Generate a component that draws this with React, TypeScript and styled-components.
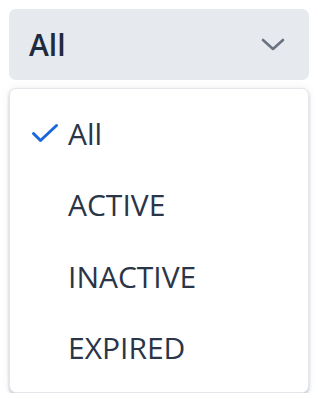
import styled, { createGlobalStyle } from 'styled-components'

const GlobalStyle = createGlobalStyle`
  body {
    margin: 0;
    background: #ffffff;
    font-family: 'Open Sans', 'Noto Sans', sans-serif;
  }
`

const Wrapper = styled.div`
  display: flex;
  flex-direction: column;
  gap: 8px;
  padding: 9px 9px 0;
  width: 300px;
`

const Trigger = styled.button`
  align-items: center;
  background: #e6e9ee;
  border: none;
  border-radius: 7px;
  color: #1f2a3c;
  display: flex;
  font-family: inherit;
  font-size: 30px;
  font-weight: 600;
  height: 71px;
  justify-content: space-between;
  padding: 0 24px 0 20px;
  width: 100%;
`

const Menu = styled.ul`
  background: #ffffff;
  border: 1px solid #e3e6eb;
  border-radius: 7px;
  box-shadow: 0 2px 3px rgba(100, 110, 130, 0.35), 0 0 8px rgba(120, 130, 150, 0.12);
  display: flex;
  flex-direction: column;
  height: 305px;
  justify-content: center;
  list-style: none;
  margin: 0;
  padding: 0;
  box-sizing: border-box;
`

const Item = styled.li`
  align-items: center;
  color: #2a3547;
  display: flex;
  font-size: 30px;
  font-weight: 400;
  height: 71.5px;
  padding-left: 21px;
`

const Check = styled.span`
  display: inline-flex;
  width: 37px;
`

const ITEMS = ['All', 'ACTIVE', 'INACTIVE', 'EXPIRED']

export default function App() {
  return (
    <>
      <GlobalStyle />
      <Wrapper>
        <Trigger>
          All
          <svg width='24' height='14' viewBox='0 0 24 14' fill='none'>
            <path d='M2 2l10 9 10-9' stroke='#6b7280' strokeWidth='2.6' strokeLinecap='round' strokeLinejoin='round' />
          </svg>
        </Trigger>
        <Menu>
          {ITEMS.map((item) => (
            <Item key={item}>
              <Check>
                {item === 'All' && (
                  <svg width='28' height='20' viewBox='0 0 28 20' fill='none'>
                    <path d='M2.5 10.5l7 7L25.5 2.5' stroke='#1a66dc' strokeWidth='3' strokeLinecap='round' strokeLinejoin='round' />
                  </svg>
                )}
              </Check>
              {item}
            </Item>
          ))}
        </Menu>
      </Wrapper>
    </>
  )
}
